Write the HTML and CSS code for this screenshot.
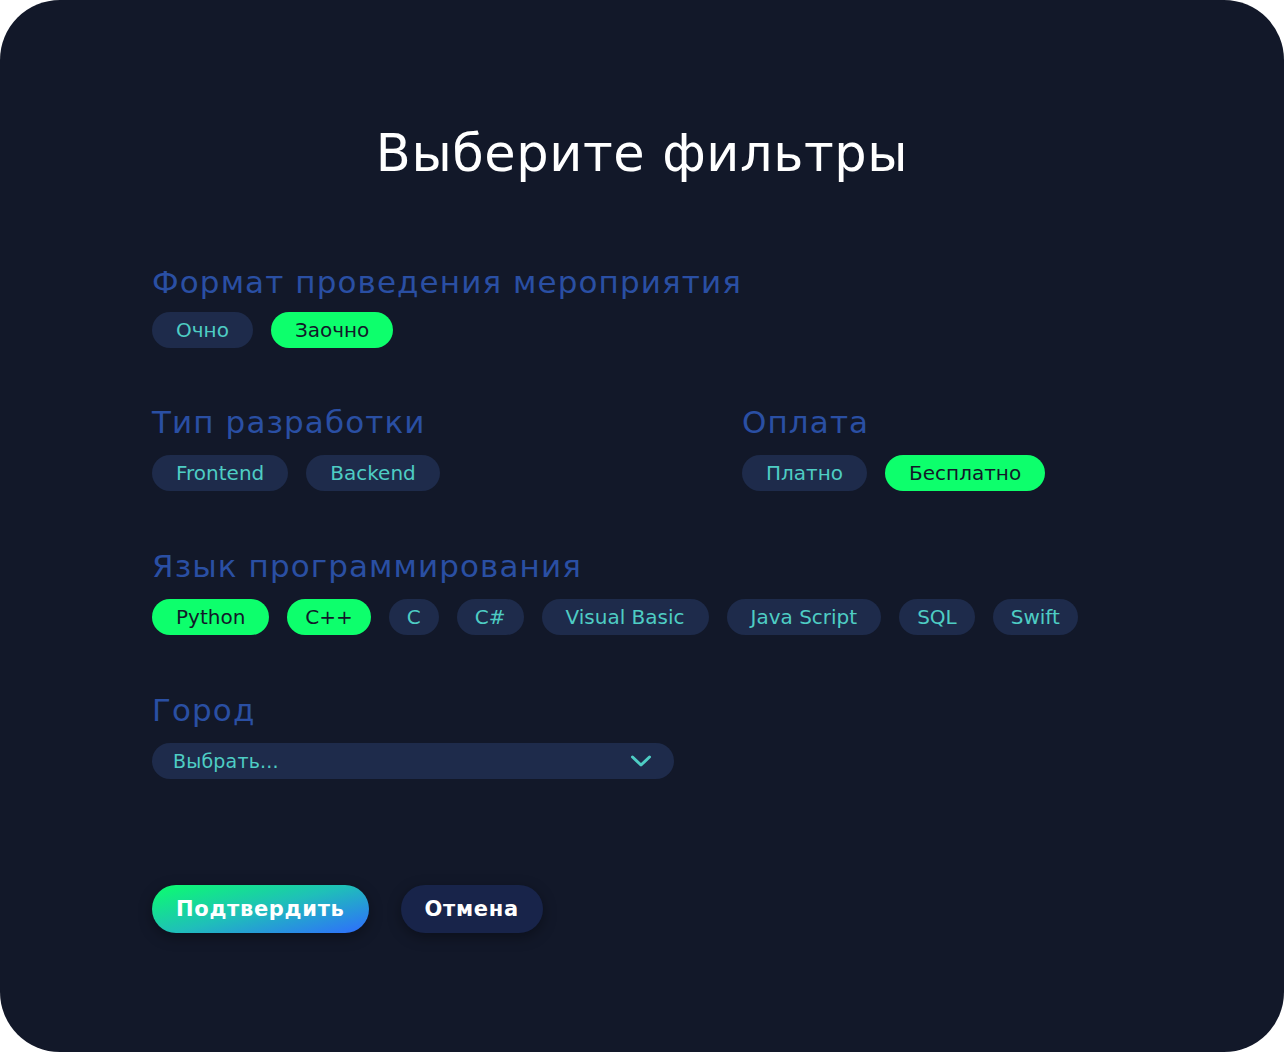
FILE: index.html
```html
<!DOCTYPE html>
<html lang="ru">
<head>
<meta charset="utf-8">
<title>Фильтры</title>
<link rel="stylesheet" href="styles.css">
</head>
<body>
<div class="card">
  <h1 class="title">Выберите фильтры</h1>

  <section class="group group-first">
    <h2 class="group-title">Формат проведения мероприятия</h2>
    <div class="chips">
      <span class="chip">Очно</span>
      <span class="chip chip-on">Заочно</span>
    </div>
  </section>

  <div class="row">
    <section class="group">
      <h2 class="group-title">Тип разработки</h2>
      <div class="chips">
        <span class="chip">Frontend</span>
        <span class="chip">Backend</span>
      </div>
    </section>
    <section class="group">
      <h2 class="group-title">Оплата</h2>
      <div class="chips">
        <span class="chip">Платно</span>
        <span class="chip chip-on">Бесплатно</span>
      </div>
    </section>
  </div>

  <section class="group">
    <h2 class="group-title">Язык программирования</h2>
    <div class="chips">
      <span class="chip chip-on">Python</span>
      <span class="chip chip-on chip-tight">C++</span>
      <span class="chip chip-tight">C</span>
      <span class="chip chip-tight">C#</span>
      <span class="chip">Visual Basic</span>
      <span class="chip">Java Script</span>
      <span class="chip chip-tight">SQL</span>
      <span class="chip chip-tight">Swift</span>
    </div>
  </section>

  <section class="group">
    <h2 class="group-title">Город</h2>
    <div class="select">
      <span class="select-text">Выбрать...</span>
      <svg class="chevron" width="22" height="14" viewBox="0 0 22 14"><path d="M2.5 3 L11 11 L19.5 3" fill="none" stroke="#4ecdc4" stroke-width="3" stroke-linecap="round" stroke-linejoin="round"/></svg>
    </div>
  </section>

  <div class="actions">
    <button class="btn btn-primary">Подтвердить</button>
    <button class="btn btn-secondary">Отмена</button>
  </div>
</div>
</body>
</html>
```
FILE: styles.css
```css
html, body {
  margin: 0;
  padding: 0;
  background: #ffffff;
}
.card {
  box-sizing: border-box;
  width: 1284px;
  height: 1052px;
  background: #121829;
  border-radius: 60px;
  padding: 119px 152px 0 152px;
  font-family: "DejaVu Sans", sans-serif;
}
.title {
  margin: 0 0 75px 0;
  text-align: center;
  color: #ffffff;
  font-weight: 400;
  font-size: 51px;
  line-height: 70px;
  letter-spacing: 0.6px;
}
.group {
  margin: 0 0 57px 0;
}
.group-first {
  margin-bottom: 56px;
}
.row {
  display: grid;
  grid-template-columns: 590px 1fr;
}
.group-title {
  margin: 0 0 15px 0;
  color: #2a4fa3;
  font-weight: 400;
  font-size: 31px;
  line-height: 36px;
  letter-spacing: 1.1px;
}
.group-first .group-title {
  margin-bottom: 12px;
}
.chips {
  display: flex;
  gap: 18px;
}
.chip {
  display: inline-flex;
  align-items: center;
  height: 36px;
  padding: 0 24px;
  border-radius: 18px;
  background: #1e2b4b;
  color: #4ecdc4;
  font-size: 20px;
}
.chip-tight {
  padding: 0 18px;
}
.chip-on {
  background: #0dff6c;
  color: #121829;
}
.select {
  display: flex;
  align-items: center;
  justify-content: space-between;
  width: 522px;
  box-sizing: border-box;
  height: 36px;
  padding: 0 22px 0 21px;
  border-radius: 18px;
  background: #1e2b4b;
}
.select-text {
  color: #4ecdc4;
  font-size: 19px;
  letter-spacing: 0.2px;
}
.chevron {
  display: block;
}
.actions {
  display: flex;
  gap: 32px;
  margin-top: 106px;
}
.btn {
  height: 48px;
  border: none;
  border-radius: 24px;
  padding: 0 24px;
  font-family: "DejaVu Sans", sans-serif;
  font-weight: 700;
  font-size: 21px;
  letter-spacing: 0.7px;
  color: #ffffff;
  box-shadow: 0 4px 14px rgba(0, 0, 0, 0.35);
}
.btn-primary {
  background: linear-gradient(165deg, #0bff6c 0%, #1fbfb9 50%, #2f6bff 100%);
}
.btn-secondary {
  background: #18244a;
}
```
